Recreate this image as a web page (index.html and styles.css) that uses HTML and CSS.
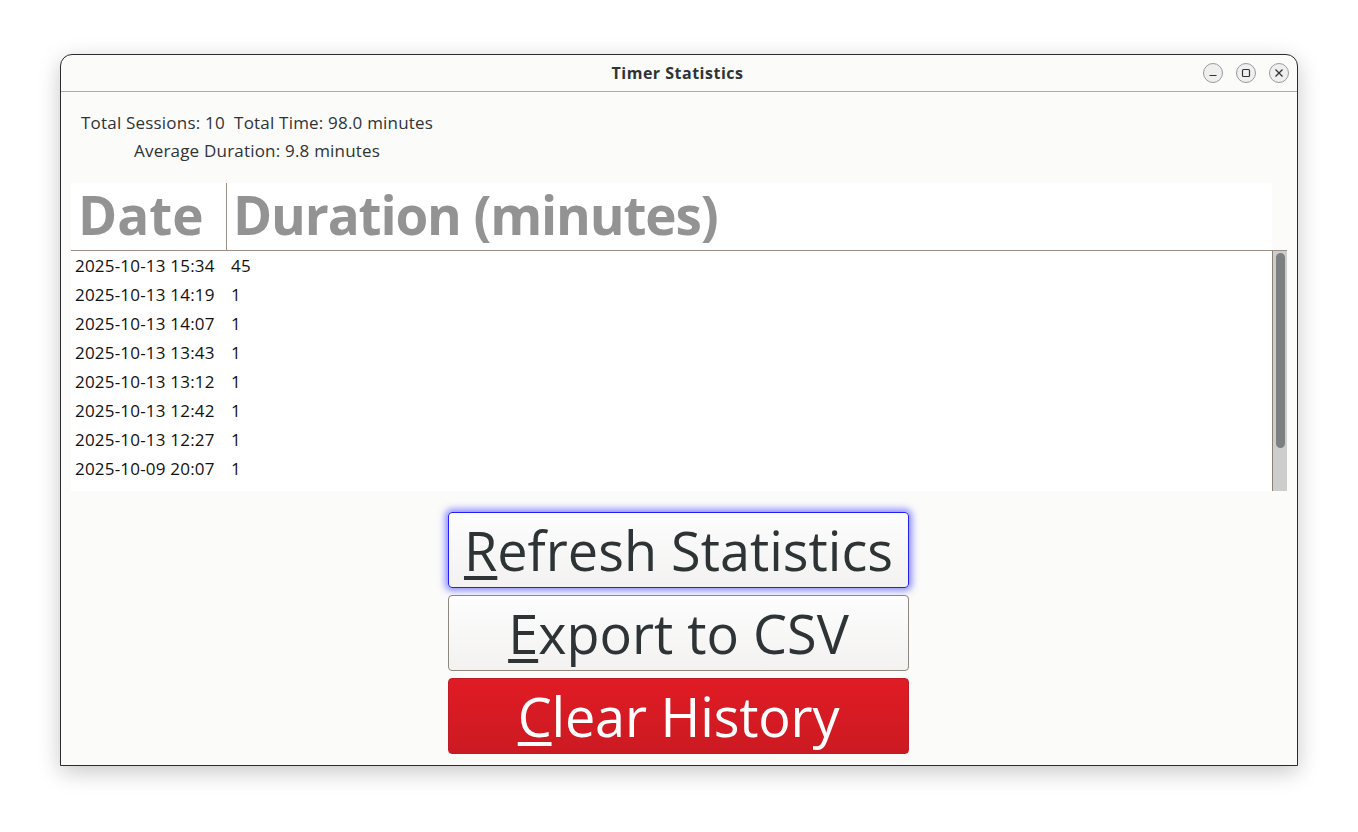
FILE: index.html
```html
<!DOCTYPE html>
<html>
<head>
<meta charset="utf-8">
<title>Timer Statistics</title>
<link rel="stylesheet" href="styles.css">
</head>
<body>
<div class="window">
  <div class="titlebar">
    <div class="title">Timer Statistics</div>
    <div class="controls">
      <span class="ctl"><svg width="20" height="20" viewBox="0 0 20 20"><line x1="6.5" y1="12.5" x2="13.5" y2="12.5" stroke="#2e3436" stroke-width="1.2"/></svg></span>
      <span class="ctl"><svg width="20" height="20" viewBox="0 0 20 20"><rect x="6.5" y="6.5" width="7" height="7" rx="1" fill="none" stroke="#2e3436" stroke-width="1.2"/></svg></span>
      <span class="ctl"><svg width="20" height="20" viewBox="0 0 20 20"><path d="M6.5 6.5 L13.5 13.5 M13.5 6.5 L6.5 13.5" stroke="#2e3436" stroke-width="1.3"/></svg></span>
    </div>
  </div>
  <div class="content">
    <div class="stats">Total Sessions: 10&nbsp; Total Time: 98.0 minutes<br>Average Duration: 9.8 minutes</div>
    <div class="table">
      <div class="thead">
        <div class="th th-date">Date</div>
        <div class="th th-dur">Duration (minutes)</div>
        <div class="th-fill"></div>
      </div>
      <div class="tbody">
        <div class="rows">
          <div class="row"><span class="c1">2025-10-13 15:34</span><span class="c2">45</span></div>
          <div class="row"><span class="c1">2025-10-13 14:19</span><span class="c2">1</span></div>
          <div class="row"><span class="c1">2025-10-13 14:07</span><span class="c2">1</span></div>
          <div class="row"><span class="c1">2025-10-13 13:43</span><span class="c2">1</span></div>
          <div class="row"><span class="c1">2025-10-13 13:12</span><span class="c2">1</span></div>
          <div class="row"><span class="c1">2025-10-13 12:42</span><span class="c2">1</span></div>
          <div class="row"><span class="c1">2025-10-13 12:27</span><span class="c2">1</span></div>
          <div class="row"><span class="c1">2025-10-09 20:07</span><span class="c2">1</span></div>
          <div class="row"><span class="c1">2025-10-09 19:46</span><span class="c2">45</span></div>
          <div class="row"><span class="c1">2025-10-09 19:30</span><span class="c2">1</span></div>
        </div>
        <div class="scrollbar"><div class="thumb"></div></div>
      </div>
    </div>
    <div class="buttons">
      <button class="btn btn-focus"><span class="mn">R</span>efresh Statistics</button>
      <button class="btn"><span class="mn">E</span>xport to CSV</button>
      <button class="btn btn-danger"><span class="mn">C</span>lear History</button>
    </div>
  </div>
</div>
</body>
</html>
```

FILE: styles.css
```css
* { box-sizing: border-box; }
html, body { margin: 0; padding: 0; }
body {
  background: #ffffff;
  width: 1358px;
  height: 832px;
  overflow: hidden;
  font-family: "Open Sans", "Noto Sans", sans-serif;
}
.window {
  margin: 54px 0 0 60px;
  width: 1238px;
  height: 712px;
  border: 1px solid #2b2b2b;
  border-radius: 12px 12px 0 0;
  background: #fbfbfa;
  box-shadow: 0 6px 22px rgba(0,0,0,0.22);
  display: flex;
  flex-direction: column;
  overflow: hidden;
}
.titlebar {
  height: 37px;
  flex: none;
  border-bottom: 1px solid #ababab;
  display: flex;
  align-items: center;
  justify-content: center;
  position: relative;
}
.title {
  font-weight: 700;
  font-size: 16px;
  color: #2e3436;
  letter-spacing: 0.5px;
  margin-left: -3px;
}
.controls {
  position: absolute;
  right: 8px;
  top: 8px;
  display: flex;
  gap: 13px;
}
.ctl {
  width: 20px;
  height: 20px;
  border-radius: 50%;
  border: 1px solid #9a9a9a;
  background: #efefef;
  display: flex;
  align-items: center;
  justify-content: center;
}
.ctl svg { display: block; margin: -1px; }
.content {
  flex: 1;
  display: flex;
  flex-direction: column;
  padding: 17px 10px 11px 10px;
}
.stats {
  align-self: flex-start;
  margin-left: 10px;
  text-align: center;
  font-size: 17px;
  letter-spacing: 0.2px;
  line-height: 28px;
  color: #2e3436;
}
.table {
  margin-top: 18px;
  display: flex;
  flex-direction: column;
  height: 308px;
}
.thead {
  height: 68px;
  display: flex;
  border-bottom: 1px solid #9a8f84;
  flex: none;
}
.th {
  background: #ffffff;
  color: #939393;
  font-weight: 700;
  font-size: 53px;
  line-height: 64px;
  white-space: nowrap;
}
.th-date {
  width: 156px;
  padding-left: 7px;
  border-right: 1px solid #9a8f84;
}
.th-dur {
  flex: 1;
  padding-left: 6px;
  letter-spacing: -1.15px;
}
.th-fill { width: 15px; }
.tbody {
  flex: 1;
  display: flex;
  min-height: 0;
}
.rows {
  flex: 1;
  background: #ffffff;
  overflow: hidden;
}
.row {
  height: 29px;
  display: flex;
  align-items: center;
  font-size: 17px;
  letter-spacing: 0.2px;
  color: #111111;
}
.c1 { width: 156px; padding-left: 4px; }
.c2 { padding-left: 4px; }
.scrollbar {
  width: 15px;
  background: #cdcdcd;
  border-left: 1px solid #8c8072;
  padding: 2px 2px 0 2px;
}
.thumb {
  height: 195px;
  margin-left: 1px;
  width: 9px;
  border-radius: 5px;
  background: #7c8081;
}
.buttons {
  margin-top: 21px;
  display: flex;
  flex-direction: column;
  align-items: center;
  gap: 7px;
}
.btn {
  width: 461px;
  height: 76px;
  margin-left: -1px;
  border: 1px solid #8d8780;
  border-radius: 4px;
  background: linear-gradient(#fdfdfd, #f3f2f1);
  color: #2e3436;
  font-family: "Open Sans", "Noto Sans", sans-serif;
  font-size: 54px;
  line-height: 1;
  padding: 0;
  display: flex;
  align-items: center;
  justify-content: center;
}
.btn-focus {
  border-color: #1e1eff;
  box-shadow: 0 0 7px 3px rgba(70,70,255,0.6);
}
.btn-danger {
  background: linear-gradient(#e01b24, #cc1a22);
  border-color: #c01c28;
  color: #ffffff;
  letter-spacing: -0.2px;
}
.mn {
  text-decoration: underline;
  text-decoration-thickness: 4px;
  text-underline-offset: 5px;
}
```
